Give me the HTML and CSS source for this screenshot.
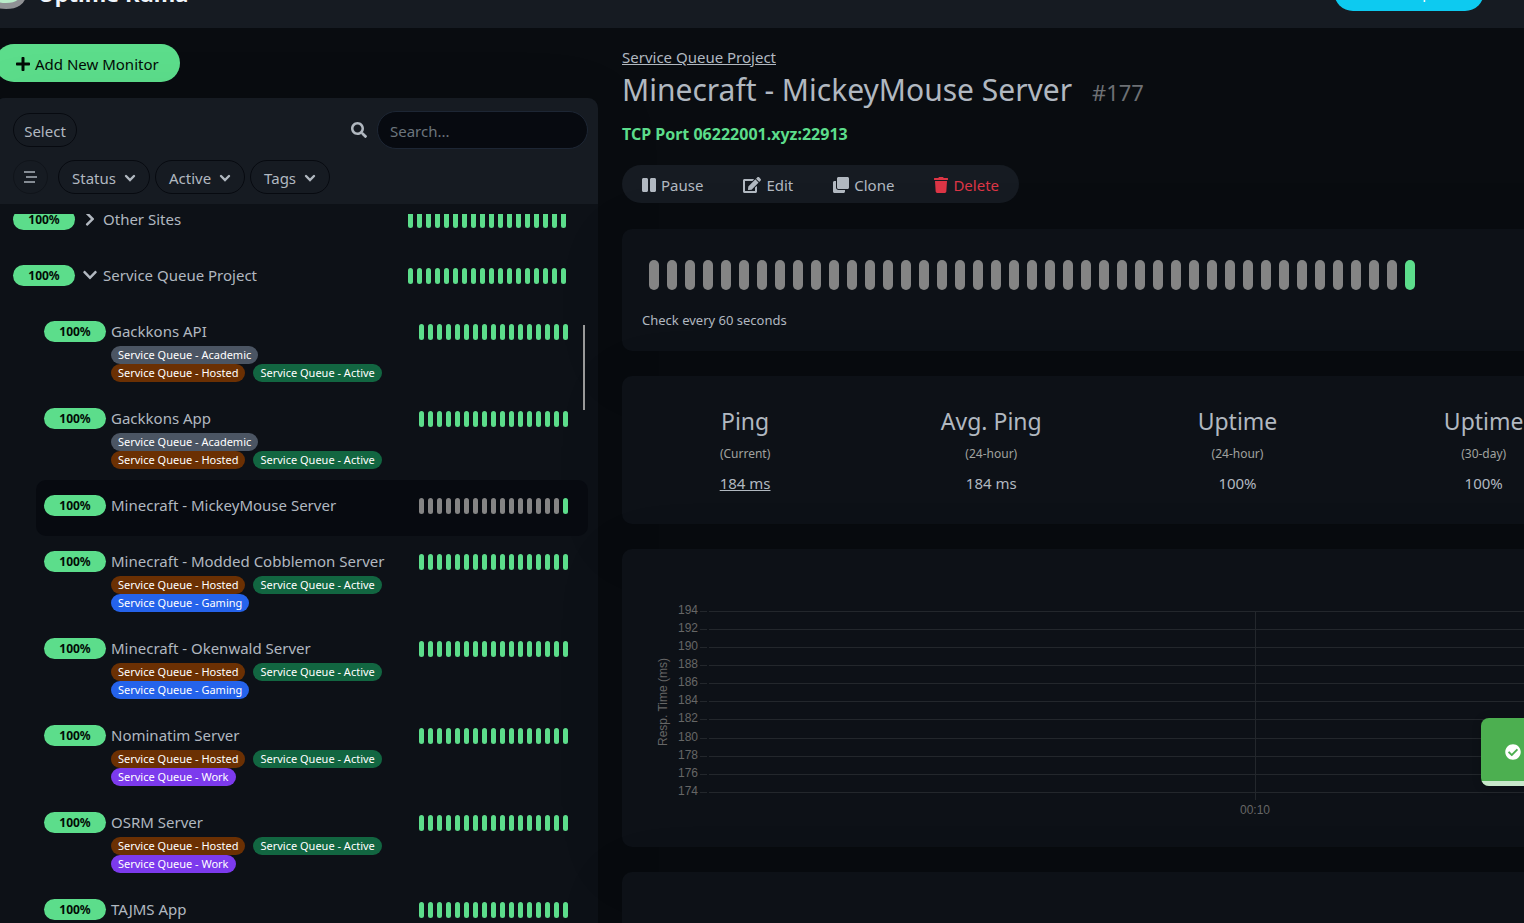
FILE: index.html
```html
<!DOCTYPE html>
<html lang="en">
<head>
    <meta charset="UTF-8">
    <meta name="viewport" content="width=device-width, initial-scale=1.0">
    <title>Uptime Kuma</title>
    <link rel="stylesheet" href="styles.css">
</head>
<body>
    <!-- Shared icons -->
    <svg class="icon-defs" aria-hidden="true">
        <symbol id="icon-plus" viewBox="0 0 448 512"><path d="M416 208H272V64c0-17.67-14.33-32-32-32h-32c-17.67 0-32 14.33-32 32v144H32c-17.67 0-32 14.33-32 32v32c0 17.67 14.33 32 32 32h144v144c0 17.67 14.33 32 32 32h32c17.67 0 32-14.33 32-32V304h144c17.67 0 32-14.33 32-32v-32c0-17.67-14.33-32-32-32z"/></symbol>
        <symbol id="icon-search" viewBox="0 0 512 512"><path d="M505 442.7L405.3 343c-4.5-4.5-10.6-7-17-7H372c27.6-35.3 44-79.7 44-128C416 93.1 322.9 0 208 0S0 93.1 0 208s93.1 208 208 208c48.3 0 92.7-16.4 128-44v16.3c0 6.4 2.5 12.5 7 17l99.7 99.7c9.4 9.4 24.6 9.4 33.9 0l28.3-28.3c9.4-9.4 9.4-24.6.1-34zM208 336c-70.7 0-128-57.2-128-128 0-70.7 57.2-128 128-128 70.7 0 128 57.2 128 128 0 70.7-57.2 128-128 128z"/></symbol>
        <symbol id="icon-chevron" viewBox="0 0 448 512"><path d="M207.029 381.476L12.686 187.132c-9.373-9.373-9.373-24.569 0-33.941l22.667-22.667c9.357-9.357 24.522-9.375 33.901-.04L224 284.505l154.745-154.021c9.379-9.335 24.544-9.317 33.901.04l22.667 22.667c9.373 9.373 9.373 24.569 0 33.941L240.971 381.476c-9.373 9.372-24.569 9.372-33.942 0z"/></symbol>
        <symbol id="icon-caret" viewBox="0 0 12 12"><path d="M2 4l4 4 4-4" fill="none" stroke="currentColor" stroke-width="2.4" stroke-linecap="round"/></symbol>
        <symbol id="icon-stream" viewBox="0 0 15 16"><path d="M1 2h11v2H1zM3 7h11v2H3zM1 12h11v2H1z"/></symbol>
        <symbol id="icon-pause" viewBox="0 0 448 512"><path d="M144 479H48c-26.5 0-48-21.5-48-48V79c0-26.5 21.5-48 48-48h96c26.5 0 48 21.5 48 48v352c0 26.5-21.5 48-48 48zm304-48V79c0-26.5-21.5-48-48-48h-96c-26.5 0-48 21.5-48 48v352c0 26.5 21.5 48 48 48h96c26.5 0 48-21.5 48-48z"/></symbol>
        <symbol id="icon-edit" viewBox="0 0 576 512"><path d="M402.6 83.2l90.2 90.2c3.8 3.8 3.8 10 0 13.8L274.4 405.6l-92.8 10.3c-12.4 1.4-22.9-9.1-21.5-21.5l10.3-92.8L388.8 83.2c3.8-3.8 10-3.8 13.8 0zm162-22.9l-48.8-48.8c-15.2-15.2-39.9-15.2-55.2 0l-35.4 35.4c-3.8 3.8-3.8 10 0 13.8l90.2 90.2c3.8 3.8 10 3.8 13.8 0l35.4-35.4c15.2-15.3 15.2-40 0-55.2zM384 346.2V448H64V128h229.8c3.2 0 6.2-1.3 8.5-3.5l40-40c7.6-7.6 2.2-20.5-8.5-20.5H48C21.5 64 0 85.5 0 112v352c0 26.5 21.5 48 48 48h352c26.5 0 48-21.5 48-48V306.2c0-10.7-12.9-16-20.5-8.5l-40 40c-2.2 2.3-3.5 5.3-3.5 8.5z"/></symbol>
        <symbol id="icon-clone" viewBox="0 0 512 512"><path d="M464 0c26.51 0 48 21.49 48 48v288c0 26.51-21.49 48-48 48H176c-26.51 0-48-21.49-48-48V48c0-26.51 21.49-48 48-48h288M176 416c-44.112 0-80-35.888-80-80V128H48c-26.51 0-48 21.49-48 48v288c0 26.51 21.49 48 48 48h288c26.51 0 48-21.49 48-48v-48H176z"/></symbol>
        <symbol id="icon-trash" viewBox="0 0 448 512"><path d="M432 32H312l-9.4-18.7A24 24 0 0 0 281.1 0H166.8a23.72 23.72 0 0 0-21.4 13.3L136 32H16A16 16 0 0 0 0 48v32a16 16 0 0 0 16 16h416a16 16 0 0 0 16-16V48a16 16 0 0 0-16-16zM53.2 467a48 48 0 0 0 47.9 45h245.8a48 48 0 0 0 47.9-45L416 128H32z"/></symbol>
        <symbol id="icon-check" viewBox="0 0 512 512"><path d="M504 256c0 136.967-111.033 248-248 248S8 392.967 8 256 119.033 8 256 8s248 111.033 248 248zM227.314 387.314l184-184c6.248-6.248 6.248-16.379 0-22.627l-22.627-22.627c-6.248-6.249-16.379-6.249-22.628 0L216 308.118l-70.059-70.059c-6.248-6.248-16.379-6.248-22.628 0l-22.627 22.627c-6.248 6.248-6.248 16.379 0 22.627l104 104c6.249 6.249 16.379 6.249 22.628.001z"/></symbol>
        <symbol id="icon-up" viewBox="0 0 16 16"><path d="M8 0a8 8 0 1 0 0 16A8 8 0 0 0 8 0zm0 3l4 4H9v5H7V7H4z"/></symbol>
    </svg>

    <div class="page">
        <header class="header">
            <a class="brand" href="#">
                <svg class="logo" viewBox="0 0 40 40"><path d="M20 4C8 4 3 16 3 25c0 8 7 12 17 12s17-4 17-12C37 16 32 4 20 4z" fill="#b9ecc9" stroke="#8f9194" stroke-width="6"/></svg>
                <span class="brand-name">Uptime Kuma</span>
            </a>
            <a class="update-btn" href="#"><svg class="icon"><use href="#icon-up"/></svg>New Update</a>
        </header>

        <main class="content">
            <div class="left-col">
                <button class="add-btn"><svg class="icon icon-narrow"><use href="#icon-plus"/></svg>Add New Monitor</button>

                <div class="sidebar">
                    <div class="list-header">
                        <div class="header-row">
                            <button class="pill-btn select-btn">Select</button>
                            <label class="search-label" for="search" aria-label="Search"><svg class="icon"><use href="#icon-search"/></svg></label>
                            <input class="search-input" id="search" type="text" placeholder="Search...">
                        </div>
                        <div class="filter-row">
                            <button class="pill-btn stream-btn" aria-label="Collapse"><svg class="stream-icon"><use href="#icon-stream"/></svg></button>
                            <button class="pill-btn filter-btn">Status<svg class="caret"><use href="#icon-caret"/></svg></button>
                            <button class="pill-btn filter-btn">Active<svg class="caret"><use href="#icon-caret"/></svg></button>
                            <button class="pill-btn filter-btn">Tags<svg class="caret"><use href="#icon-caret"/></svg></button>
                        </div>
                    </div>

                    <div class="list-body">
                        <div class="list">
                            <a class="item group" href="#">
                                <span class="badge">100%</span>
                                <svg class="chevron collapsed"><use href="#icon-chevron"/></svg>
                                <div class="info"><div class="name">Other Sites</div></div>
                                <div class="beats" data-count="18"></div>
                            </a>
                            <a class="item group" href="#">
                                <span class="badge">100%</span>
                                <svg class="chevron"><use href="#icon-chevron"/></svg>
                                <div class="info"><div class="name">Service Queue Project</div></div>
                                <div class="beats" data-count="18"></div>
                            </a>

                            <div class="children">
                                <a class="item" href="#">
                                    <span class="badge">100%</span>
                                    <div class="info">
                                        <div class="name">Gackkons API</div>
                                        <div class="tags">
                                            <span class="tag academic">Service Queue - Academic</span>
                                            <span class="tag hosted">Service Queue - Hosted</span>
                                            <span class="tag active">Service Queue - Active</span>
                                        </div>
                                    </div>
                                    <div class="beats" data-count="17"></div>
                                </a>
                                <a class="item" href="#">
                                    <span class="badge">100%</span>
                                    <div class="info">
                                        <div class="name">Gackkons App</div>
                                        <div class="tags">
                                            <span class="tag academic">Service Queue - Academic</span>
                                            <span class="tag hosted">Service Queue - Hosted</span>
                                            <span class="tag active">Service Queue - Active</span>
                                        </div>
                                    </div>
                                    <div class="beats" data-count="17"></div>
                                </a>
                                <a class="item selected" href="#">
                                    <span class="badge">100%</span>
                                    <div class="info"><div class="name">Minecraft - MickeyMouse Server</div></div>
                                    <div class="beats" data-count="17" data-empty="16"></div>
                                </a>
                                <a class="item" href="#">
                                    <span class="badge">100%</span>
                                    <div class="info">
                                        <div class="name">Minecraft - Modded Cobblemon Server</div>
                                        <div class="tags">
                                            <span class="tag hosted">Service Queue - Hosted</span>
                                            <span class="tag active">Service Queue - Active</span>
                                            <span class="tag gaming">Service Queue - Gaming</span>
                                        </div>
                                    </div>
                                    <div class="beats" data-count="17"></div>
                                </a>
                                <a class="item" href="#">
                                    <span class="badge">100%</span>
                                    <div class="info">
                                        <div class="name">Minecraft - Okenwald Server</div>
                                        <div class="tags">
                                            <span class="tag hosted">Service Queue - Hosted</span>
                                            <span class="tag active">Service Queue - Active</span>
                                            <span class="tag gaming">Service Queue - Gaming</span>
                                        </div>
                                    </div>
                                    <div class="beats" data-count="17"></div>
                                </a>
                                <a class="item" href="#">
                                    <span class="badge">100%</span>
                                    <div class="info">
                                        <div class="name">Nominatim Server</div>
                                        <div class="tags">
                                            <span class="tag hosted">Service Queue - Hosted</span>
                                            <span class="tag active">Service Queue - Active</span>
                                            <span class="tag work">Service Queue - Work</span>
                                        </div>
                                    </div>
                                    <div class="beats" data-count="17"></div>
                                </a>
                                <a class="item" href="#">
                                    <span class="badge">100%</span>
                                    <div class="info">
                                        <div class="name">OSRM Server</div>
                                        <div class="tags">
                                            <span class="tag hosted">Service Queue - Hosted</span>
                                            <span class="tag active">Service Queue - Active</span>
                                            <span class="tag work">Service Queue - Work</span>
                                        </div>
                                    </div>
                                    <div class="beats" data-count="17"></div>
                                </a>
                                <a class="item" href="#">
                                    <span class="badge">100%</span>
                                    <div class="info"><div class="name">TAJMS App</div></div>
                                    <div class="beats" data-count="17"></div>
                                </a>
                            </div>
                        </div>
                        <div class="scroll-thumb"></div>
                    </div>
                </div>
            </div>

            <div class="right-col">
                <a class="group-link" href="#">Service Queue Project</a>
                <h1 class="title">Minecraft - MickeyMouse Server <span class="monitor-id">#177</span></h1>
                <p class="target">TCP Port 06222001.xyz:22913</p>

                <div class="actions">
                    <button class="action-btn"><svg class="icon icon-narrow"><use href="#icon-pause"/></svg>Pause</button>
                    <button class="action-btn"><svg class="icon icon-wide"><use href="#icon-edit"/></svg>Edit</button>
                    <button class="action-btn"><svg class="icon"><use href="#icon-clone"/></svg>Clone</button>
                    <button class="action-btn danger"><svg class="icon icon-narrow"><use href="#icon-trash"/></svg>Delete</button>
                </div>

                <section class="box beat-box">
                    <div class="beats big" data-count="43" data-empty="42"></div>
                    <div class="interval">Check every 60 seconds</div>
                </section>

                <section class="box stats">
                    <div class="stat">
                        <h2>Ping</h2>
                        <p>(Current)</p>
                        <a href="#">184 ms</a>
                    </div>
                    <div class="stat">
                        <h2>Avg. Ping</h2>
                        <p>(24-hour)</p>
                        <span>184 ms</span>
                    </div>
                    <div class="stat">
                        <h2>Uptime</h2>
                        <p>(24-hour)</p>
                        <span>100%</span>
                    </div>
                    <div class="stat">
                        <h2>Uptime</h2>
                        <p>(30-day)</p>
                        <span>100%</span>
                    </div>
                    <div class="stat"></div>
                </section>

                <section class="box chart-box">
                    <svg class="chart" id="chart" role="img" aria-label="Response time">
                        <text class="axis-title" transform="translate(25 133) rotate(-90)">Resp. Time (ms)</text>
                        <path class="grid" d="M613.5 42V231"/>
                        <text class="tick x-tick" x="613" y="245">00:10</text>
                    </svg>
                </section>

                <section class="box last-box"></section>
            </div>
        </main>
    </div>

    <div class="toast" role="status">
        <svg class="icon"><use href="#icon-check"/></svg>
        <div class="toast-progress"></div>
    </div>

    <script>
        // Fill every heartbeat bar
        document.querySelectorAll('.beats').forEach((bar) => {
            const empty = Number(bar.dataset.empty || 0);
            for (let i = 0; i < Number(bar.dataset.count); i++) {
                const beat = document.createElement('span');
                beat.className = i < empty ? 'beat empty' : 'beat';
                bar.appendChild(beat);
            }
        });

        // Horizontal grid lines and labels, 194 down to 174
        const chart = document.getElementById('chart');
        const ns = 'http://www.w3.org/2000/svg';
        for (let i = 0; i <= 10; i++) {
            const y = 42 + Math.floor(i * 18.15);
            [[58, 65], [67, '100%']].forEach(([x1, x2]) => {
                const line = document.createElementNS(ns, 'line');
                line.setAttribute('class', 'grid');
                line.setAttribute('x1', x1);
                line.setAttribute('x2', x2);
                line.setAttribute('y1', y + 0.5);
                line.setAttribute('y2', y + 0.5);
                chart.appendChild(line);
            });
            const label = document.createElementNS(ns, 'text');
            label.setAttribute('class', 'tick');
            label.setAttribute('x', 56);
            label.setAttribute('y', y + 3);
            label.textContent = 194 - i * 2;
            chart.appendChild(label);
        }
    </script>
</body>
</html>
```

FILE: styles.css
```css
:root {
    --primary: #5cdd8b;
    --danger: #dc3545;
    --text: #b1b8c0;
    --bg: #090c10;
    --bg-box: #0d1117;
    --bg-header: #161b22;
    --bg-deep: #070a10;
    --border: #1d2634;
    --shadow: 0 15px 70px rgba(0, 0, 0, 0.1);
}

* {
    margin: 0;
    padding: 0;
    box-sizing: border-box;
}

body {
    font-family: "Segoe UI", "Noto Sans", "Open Sans", sans-serif;
    font-size: 15px;
    line-height: 24px;
    color: var(--text);
    background-color: var(--bg);
    height: 100vh;
    overflow: hidden;
}

a {
    color: inherit;
    text-decoration: none;
}

button,
input {
    font: inherit;
    color: inherit;
}

button {
    border: none;
    background: none;
    cursor: pointer;
}

.icon-defs {
    display: none;
}

.icon {
    width: 16px;
    height: 16px;
    fill: currentColor;
    flex-shrink: 0;
}

.icon-narrow {
    width: 14px;
}

.icon-wide {
    width: 18px;
}

/* The page runs past both window edges */
.page {
    display: flex;
    flex-direction: column;
    height: 100vh;
    margin: 0 -329px 0 -5px;
}

.header {
    display: flex;
    align-items: flex-end;
    justify-content: space-between;
    height: 28px;
    flex-shrink: 0;
    overflow: hidden;
    padding: 0 369px 17px 0;
    background-color: var(--bg-header);
}

.brand {
    display: flex;
    align-items: flex-end;
    gap: 12px;
    padding-bottom: 2px;
    color: #f0f6fc;
}

.logo {
    width: 40px;
    height: 40px;
    margin-left: -9px;
}

.brand-name {
    padding-bottom: 4px;
    font-size: 22px;
    line-height: 24px;
    font-weight: 700;
}

.update-btn {
    display: flex;
    align-items: center;
    gap: 5px;
    height: 38px;
    padding: 0 21px;
    border-radius: 19px;
    background-color: #0dcaf0;
    color: white;
}

.content {
    display: flex;
    gap: 24px;
    flex: 1;
    min-height: 0;
    padding-top: 16px;
}

.left-col {
    display: flex;
    flex-direction: column;
    align-items: flex-start;
    gap: 16px;
    width: 603px;
    flex-shrink: 0;
}

.add-btn {
    display: flex;
    align-items: center;
    gap: 5px;
    height: 38px;
    flex-shrink: 0;
    padding: 2px 21px 0;
    border-radius: 19px;
    background-color: var(--primary);
    color: #020b05;
}

.sidebar {
    display: flex;
    flex-direction: column;
    width: 100%;
    flex: 1;
    min-height: 0;
    border-radius: 10px 10px 0 0;
    background-color: var(--bg-box);
    box-shadow: var(--shadow);
}

.list-header {
    padding: 13px 10px 10px 18px;
    border-radius: 10px 10px 0 0;
    background-color: var(--bg-header);
}

.header-row,
.filter-row {
    display: flex;
    align-items: center;
}

.filter-row {
    gap: 5px;
    margin-top: 11px;
}

.pill-btn {
    display: flex;
    align-items: center;
    justify-content: center;
    height: 34px;
    padding-top: 2px;
    border: 1px solid #070a10;
    border-radius: 17px;
}

.select-btn {
    width: 64px;
}

.stream-btn {
    width: 35px;
    margin-right: 5px;
    padding-top: 0;
    border-color: #10141a;
    color: #858c94;
}

.stream-icon {
    width: 15px;
    height: 16px;
    fill: currentColor;
}

.filter-btn {
    gap: 8px;
    padding: 2px 13px 0;
}

.caret {
    width: 12px;
    height: 12px;
}

.search-label {
    display: flex;
    margin: 0 10px 0 auto;
}

.search-input {
    width: 211px;
    height: 38px;
    padding: 2px 12px 0;
    border: 1px solid var(--border);
    border-radius: 19px;
    background-color: var(--bg-deep);
}

.search-input::placeholder {
    color: #6c757d;
}

.list-body {
    position: relative;
    flex: 1;
    min-height: 0;
    padding: 10px 10px 0;
}

/* Scrolled down a little, so the first row is cut */
.list {
    height: 100%;
    overflow: hidden;
}

.list .item:first-child.group {
    margin-top: -20px;
}

.children {
    padding-left: 31px;
}

.item {
    display: flex;
    align-items: flex-start;
    min-height: 56px;
    padding: 13px 20px 11px 8px;
    border-radius: 10px;
}

.item.group {
    padding-right: 22px;
}

.item.selected {
    background-color: var(--bg-deep);
}

.badge {
    width: 62px;
    height: 21px;
    flex-shrink: 0;
    margin: 2px 5px 0 0;
    border-radius: 11px;
    background-color: var(--primary);
    color: #020b05;
    font-size: 12px;
    font-weight: 700;
    line-height: 22px;
    text-align: center;
}

.chevron {
    width: 14px;
    height: 16px;
    flex-shrink: 0;
    margin: 4px 6px 0 3px;
    fill: currentColor;
}

.chevron.collapsed {
    transform: rotate(-90deg);
}

.info {
    flex: 1;
    min-width: 0;
}

.name {
    white-space: nowrap;
}

.tags {
    display: flex;
    flex-wrap: wrap;
    column-gap: 8px;
    width: 280px;
    margin-top: 3px;
}

.tag {
    height: 18px;
    padding: 0 7px;
    border-radius: 9px;
    color: white;
    font-size: 11px;
    line-height: 17px;
    white-space: nowrap;
}

.tag.academic {
    background-color: #4b5563;
}

.tag.hosted {
    background-color: #6b3003;
}

.tag.active {
    background-color: #126641;
}

.tag.gaming {
    background-color: #2563eb;
}

.tag.work {
    background-color: #7c3aed;
}

.beats {
    display: flex;
    gap: 4px;
    margin-top: 5px;
}

.beat {
    width: 5px;
    height: 16px;
    border-radius: 3px;
    background-color: var(--primary);
}

.beat.empty {
    background-color: #848484;
}

.beats.big {
    gap: 8px;
    margin: 0;
    padding-left: 7px;
}

.beats.big .beat {
    width: 10px;
    height: 30px;
    border-radius: 5px;
}

.scroll-thumb {
    position: absolute;
    top: 121px;
    right: 13px;
    width: 2px;
    height: 85px;
    background-color: #999;
}

.right-col {
    flex: 1;
    min-width: 0;
}

.group-link {
    display: block;
    width: fit-content;
    margin-top: 1px;
    text-decoration: underline;
}

.title {
    margin-top: 2px;
    font-size: 30px;
    line-height: 38px;
    font-weight: 400;
    white-space: nowrap;
}

.monitor-id {
    margin-left: 12px;
    font-size: 22px;
    color: #6d7074;
}

.target {
    margin-top: 11px;
    font-size: 16px;
    font-weight: 700;
    color: var(--primary);
}

.actions {
    display: flex;
    width: fit-content;
    margin: 19px 0 26px;
    border-radius: 19px;
    background-color: var(--bg-header);
}

.action-btn {
    display: flex;
    align-items: center;
    gap: 5px;
    height: 38px;
    padding: 2px 20px 0;
}

.action-btn.danger {
    color: var(--danger);
}

.box {
    margin-bottom: 25px;
    border-radius: 10px;
    background-color: var(--bg-box);
    box-shadow: var(--shadow);
}

.beat-box {
    padding: 31px 20px 19px;
}

.interval {
    margin-top: 18px;
    font-size: 13px;
}

.stats {
    display: grid;
    grid-template-columns: repeat(5, 1fr);
    padding: 29px 0;
    text-align: center;
}

.stat h2 {
    font-size: 23px;
    line-height: 32px;
    font-weight: 400;
}

.stat p {
    margin: 5px 0;
    font-size: 12px;
    color: #a0a29f;
}

.stat a {
    text-decoration: underline;
}

.chart-box {
    padding: 20px;
}

.chart {
    display: block;
    width: 100%;
    height: 258px;
}

.grid {
    stroke: #23272c;
    stroke-width: 1;
}

.tick,
.axis-title {
    font-family: "Liberation Sans", Arial, sans-serif;
    font-size: 12px;
    fill: #666;
}

.tick {
    text-anchor: end;
}

.x-tick,
.axis-title {
    text-anchor: middle;
}

.last-box {
    height: 200px;
}

.toast {
    position: fixed;
    right: -283px;
    bottom: 137px;
    display: flex;
    align-items: center;
    width: 326px;
    height: 68px;
    padding: 0 24px;
    overflow: hidden;
    border-radius: 8px;
    background-color: #4caf50;
    color: white;
    box-shadow: 0 1px 10px rgba(0, 0, 0, 0.2);
}

.toast-progress {
    position: absolute;
    left: 0;
    bottom: 0;
    width: 100%;
    height: 5px;
    background-color: rgba(255, 255, 255, 0.7);
}
```
